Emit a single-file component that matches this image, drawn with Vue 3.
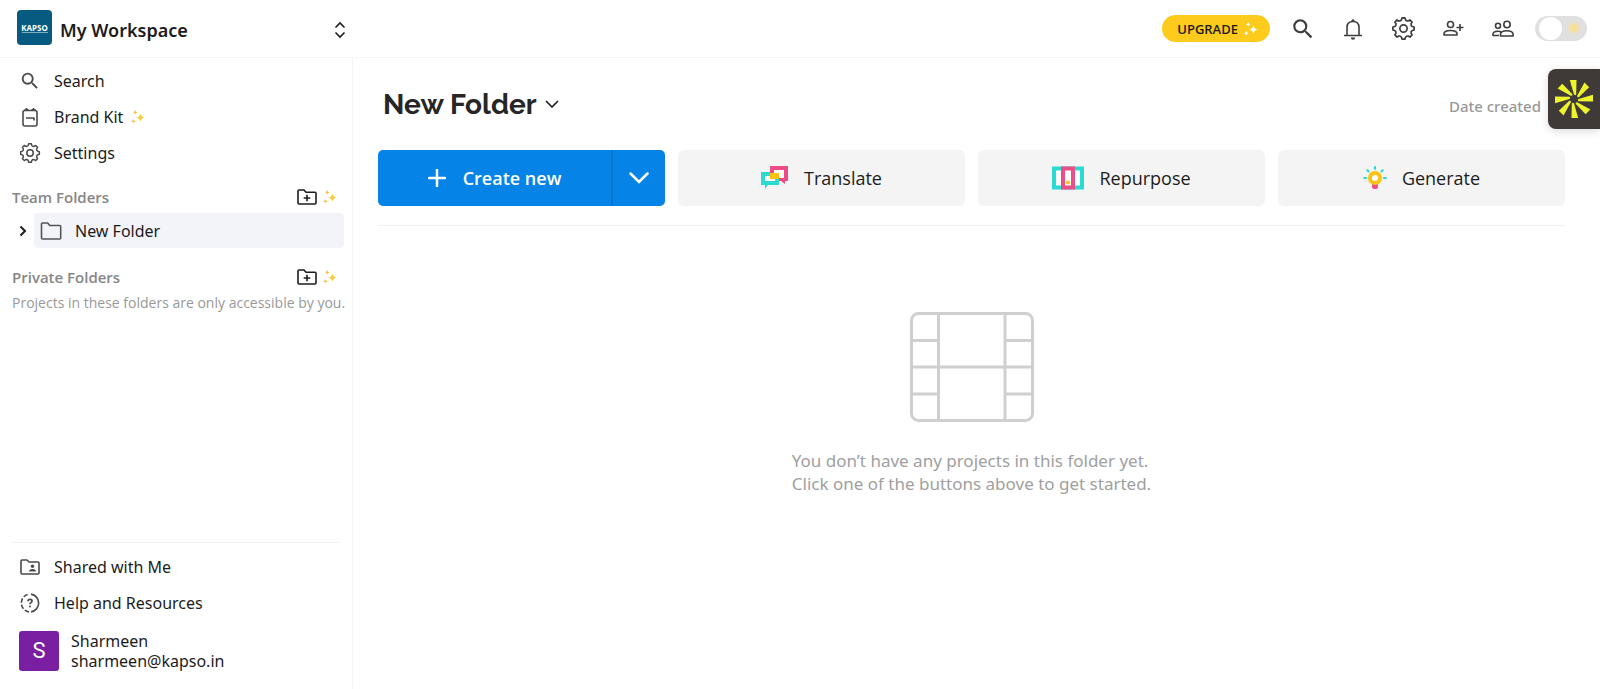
<template>
  <div class="app">
    <svg class="defs" aria-hidden="true">
      <symbol id="sparkles" viewBox="0 0 14 14">
        <path d="M9.4 3.2Q9.9 7 13.8 7.6Q9.9 8.2 9.4 12Q8.8 8.2 5 7.6Q8.8 7 9.4 3.2Z" />
        <path d="M4.2 0Q4.5 2 6.4 2.4Q4.5 2.8 4.2 4.8Q3.8 2.8 2 2.4Q3.8 2 4.2 0Z" />
        <path d="M2.4 9Q2.7 10.9 4.8 11.3Q2.7 11.6 2.4 13.6Q2 11.6 0 11.3Q2 10.9 2.4 9Z" />
      </symbol>
      <symbol id="search" viewBox="0 0 24 24">
        <path fill="currentColor" d="M15.5 14h-.79l-.28-.27A6.47 6.47 0 0 0 16 9.5 6.5 6.5 0 1 0 9.5 16c1.61 0 3.09-.59 4.23-1.57l.27.28v.79l5 4.99L20.49 19l-4.99-5zm-6 0C7.01 14 5 11.99 5 9.5S7.01 5 9.5 5 14 7.01 14 9.5 11.99 14 9.5 14z" />
      </symbol>
      <symbol id="gear" viewBox="0 0 24 24">
        <path :d="gearPath" class="line" />
        <circle cx="12" cy="12" r="3.5" class="line" />
      </symbol>
      <symbol id="kit" viewBox="0 0 20 20">
        <rect x="3" y="3.5" width="14" height="15.500" rx="2" class="line" />
        <path d="M6.500 3V1M13.500 3V1M4.500 2.800h4M11.500 2.800h4M6 11h8v2.600" class="line" />
      </symbol>
      <symbol id="shared" viewBox="0 0 20 20">
        <path d="M1 16V4q0-1 1-1h5l2 2h9q1 0 1 1v10q0 1-1 1H2q-1 0-1-1z" class="line" />
        <circle cx="12.500" cy="9.300" r="1.700" fill="currentColor" />
        <path d="M9 14.500q0-2.600 3.500-2.600t3.500 2.600z" fill="currentColor" />
      </symbol>
      <symbol id="help" viewBox="0 0 20 20">
        <path d="M11 1.100A9 9 0 0 1 11 18.900" class="line" />
        <path d="M9 18.900A9 9 0 0 1 9 1.100" class="line" stroke-dasharray="4.500 2" />
        <path d="M7.900 8.300q.1-1.900 2.100-1.900t2.100 1.700q0 1-1.200 1.700-.9.500-.9 1.500" class="line" />
        <circle cx="10" cy="13.600" r="1" fill="currentColor" />
      </symbol>
      <symbol id="folder-plus" viewBox="0 0 20 18">
        <path d="M1 15V3q0-1 1-1h5l2 2.300h9q1 0 1 1V15q0 1-1 1H2q-1 0-1-1z" class="line" />
        <path d="M10 6.700v6.600M6.700 10h6.600" class="line" />
      </symbol>
    </svg>

    <header class="topbar">
      <button class="workspace" type="button">
        <span class="workspace-logo"><span>KAPSO</span><i></i></span>
        <span class="workspace-name">My Workspace</span>
        <svg class="updown" viewBox="0 0 12 18"><path d="M1.500 6.500L6 2l4.500 4.500M1.500 11.500L6 16l4.500-4.500" /></svg>
      </button>

      <div class="actions">
        <button class="upgrade" type="button">
          UPGRADE <svg class="sparkle"><use href="#sparkles" /></svg>
        </button>
        <button class="icon-btn" type="button" aria-label="Search">
          <svg class="i-search"><use href="#search" /></svg>
        </button>
        <button class="icon-btn" type="button" aria-label="Notifications">
          <svg viewBox="0 0 22 24">
            <path d="M5 18V10.500q0-6 6-6t6 6V18M2 18.500h18" class="line" />
            <path d="M9.300 4a1.700 1.700 0 0 1 3.400 0zM8.800 20.500h4.400a2.200 2.200 0 0 1-4.400 0z" fill="currentColor" />
          </svg>
        </button>
        <button class="icon-btn" type="button" aria-label="Settings">
          <svg class="i-gear"><use href="#gear" /></svg>
        </button>
        <button class="icon-btn" type="button" aria-label="Invite people">
          <svg viewBox="0 0 22 22">
            <circle cx="8.500" cy="6.500" r="3" class="line" />
            <path d="M2 17v-1.200q0-3.300 6.500-3.300t6.500 3.300V17zM18 6v7M14.500 9.500h7" class="line" />
          </svg>
        </button>
        <button class="icon-btn" type="button" aria-label="Team members">
          <svg viewBox="0 0 22 22">
            <circle cx="15" cy="6.500" r="3.200" class="line" />
            <circle cx="6" cy="7.800" r="2.500" class="line" />
            <path d="M8.500 18v-1.400q0-3.800 6.300-3.800t6.300 3.800V18zM7 17.500H1v-1.300q0-3 5-3 1.700 0 3 .5" class="line" />
          </svg>
        </button>
        <input v-model="darkMode" class="theme-toggle" type="checkbox" aria-label="Dark mode" />
      </div>
    </header>

    <div class="body">
      <aside class="sidebar">
        <nav class="nav">
          <a v-for="item in topLinks" :key="item.label" class="nav-item" href="#">
            <svg :class="['nav-icon', item.icon]"><use :href="'#' + item.icon" /></svg>
            {{ item.label }}
            <svg v-if="item.premium" class="sparkle"><use href="#sparkles" /></svg>
          </a>
        </nav>

        <section class="folders">
          <div class="folders-head">
            <h2>Team Folders</h2>
            <button type="button" aria-label="New team folder">
              <svg class="folder-plus"><use href="#folder-plus" /></svg>
              <svg class="sparkle"><use href="#sparkles" /></svg>
            </button>
          </div>
          <div class="folder-row">
            <button class="expand" type="button" aria-label="Expand folder">
              <svg viewBox="0 0 8 12"><path d="M1.500 1.500L6 6l-4.500 4.500" /></svg>
            </button>
            <a class="folder" href="#">
              <svg viewBox="0 0 22 20"><path d="M1.500 17V3q0-1 1-1h5.200l2 2.500h10q1 0 1 1V17q0 1-1 1h-17.200q-1 0-1-1z" /></svg>
              New Folder
            </a>
          </div>
        </section>

        <section class="folders">
          <div class="folders-head">
            <h2>Private Folders</h2>
            <button type="button" aria-label="New private folder">
              <svg class="folder-plus"><use href="#folder-plus" /></svg>
              <svg class="sparkle"><use href="#sparkles" /></svg>
            </button>
          </div>
          <p class="folders-note">Projects in these folders are only accessible by you.</p>
        </section>

        <div class="sidebar-foot">
          <nav class="nav">
            <a v-for="item in bottomLinks" :key="item.label" class="nav-item" href="#">
              <svg class="nav-icon"><use :href="'#' + item.icon" /></svg>
              {{ item.label }}
            </a>
          </nav>
          <button class="account" type="button">
            <span class="avatar">S</span>
            <span class="account-text">Sharmeen<br />sharmeen@kapso.in</span>
          </button>
        </div>
      </aside>

      <main class="main">
        <div class="main-head">
          <h1>
            <button class="folder-title" type="button">
              New Folder
              <svg viewBox="0 0 14 8"><path d="M1 1l6 6 6-6" /></svg>
            </button>
          </h1>
          <button class="sort" type="button">Date created</button>
        </div>

        <div class="tiles">
          <div class="create">
            <button class="create-main" type="button">
              <svg viewBox="0 0 18 18"><path d="M9 1v16M1 9h16" /></svg>
              Create new
            </button>
            <button class="create-more" type="button" aria-label="More options">
              <svg viewBox="0 0 20 12"><path d="M1.500 1.500L10 10l8.500-8.500" /></svg>
            </button>
          </div>
          <button class="tile" type="button">
            <svg class="translate" viewBox="0 0 28 24">
              <path d="M9 0h18v15h-3v3l-4-3h-2v-3h5V4H13v3H9z" fill="#ec4d87" />
              <path d="M4 10h10v5H4z" fill="#fff" />
              <path d="M13 4h10v8h-10z" fill="#fff" />
              <path d="M0 6h9v4H4v5h10v-2h4v6H7l-3 4v-4H0z" fill="#2bdad0" />
              <path d="M9 7h9v6H9z" fill="#fac213" />
            </svg>
            Translate
          </button>
          <button class="tile" type="button">
            <svg class="repurpose" viewBox="0 0 32 24">
              <rect x="2" y="2.500" width="28" height="19" fill="#fff" stroke="#2bdad0" stroke-width="4" />
              <rect x="11" y="2.500" width="10" height="19" fill="#fff" stroke="#ec4d87" stroke-width="4" />
              <circle cx="16" cy="16.500" r="2" fill="#fac213" />
            </svg>
            Repurpose
          </button>
          <button class="tile" type="button">
            <svg class="generate" viewBox="0 0 24 24">
              <path d="M9 17h6v4q0 2-2 2h-2q-2 0-2-2z" fill="#ec4d87" />
              <circle cx="12" cy="12" r="5" fill="#fff" stroke="#fac213" stroke-width="4" />
              <path d="M12 1.200v1.600M4.300 4.300l1.200 1.100M19.700 4.300l-1.200 1.100M1.200 12h1.800M21 12h1.800" stroke="#2bdad0" stroke-width="2.200" stroke-linecap="round" />
            </svg>
            Generate
          </button>
        </div>

        <div class="empty">
          <svg viewBox="0 0 124 110">
            <rect x="1.500" y="1.500" width="121" height="107" rx="7" />
            <path d="M28.500 1.500v107M95 1.500v107M1.500 28.500h27M95 28.500h27M1.500 55h121M1.500 82h27M95 82h27" />
          </svg>
          <p>You don’t have any projects in this folder yet.<br />Click one of the buttons above to get started.</p>
        </div>
      </main>
    </div>

    <button class="side-widget" type="button" aria-label="Open assistant">
      <svg viewBox="-20 -20 40 40">
        <path
          v-for="n in 8"
          :key="n"
          d="M-4.200 -19L2.500 -19L2.200 -4.500Q1.200 -3 0 -4.500z"
          :transform="`rotate(${n * 45})`"
        />
      </svg>
    </button>
  </div>
</template>

<script setup>
import { ref } from 'vue';

const darkMode = ref(false);

const topLinks = [
  { label: 'Search', icon: 'search' },
  { label: 'Brand Kit', icon: 'kit', premium: true },
  { label: 'Settings', icon: 'gear' }
];

const bottomLinks = [
  { label: 'Shared with Me', icon: 'shared' },
  { label: 'Help and Resources', icon: 'help' }
];

// eight rounded teeth around the centre of a 24 unit box
const gearPoint = (radius, degrees) => {
  const a = (degrees * Math.PI) / 180;
  return `${(12 + radius * Math.sin(a)).toFixed(2)} ${(12 - radius * Math.cos(a)).toFixed(2)}`;
};

const gearPath = 'M' + Array.from({ length: 8 }, (_, i) => {
  const a = i * 45;
  return [
    gearPoint(10.3, a - 8),
    gearPoint(10.3, a + 8),
    `${gearPoint(8.6, a + 13)}Q${gearPoint(7.4, a + 22.5)}`,
    gearPoint(8.6, a + 32)
  ].join('L').replace(/Q([\d.]+ [\d.]+)L/, 'Q$1 ');
}).join('L') + 'Z';
</script>

<style>
body {
  margin: 0;
  background: #fff;
}
</style>

<style scoped>
.app {
  position: relative;
  display: flex;
  flex-direction: column;
  min-height: 100vh;
  overflow: hidden;
  font-family: "Noto Sans", "Open Sans", sans-serif;
  font-size: 16px;
  color: #1c1c1c;
}

.defs {
  position: absolute;
  width: 0;
  height: 0;
}

button {
  padding: 0;
  border: 0;
  background: none;
  font: inherit;
  color: inherit;
  cursor: pointer;
}

a {
  color: inherit;
  text-decoration: none;
}

svg {
  flex: none;
}

.line {
  fill: none;
  stroke: currentColor;
  stroke-width: 1.6;
  stroke-linejoin: round;
}

.sparkle {
  width: 14px;
  height: 14px;
  fill: #f8cb3c;
}

/* Top bar */
.topbar {
  display: flex;
  justify-content: space-between;
  height: 57px;
  border-bottom: 1px solid #f5f5f5;
}

.workspace {
  display: flex;
  align-items: center;
  width: 352px;
  padding: 0 6px 2px 17px;
  box-sizing: border-box;
  text-align: left;
}

.workspace-logo {
  display: flex;
  flex-direction: column;
  align-items: center;
  justify-content: center;
  width: 35px;
  height: 35px;
  margin-right: 8px;
  border-radius: 4px;
  background: #075b80;
  color: #fff;
  font-size: 8px;
  font-weight: 700;
  line-height: 9px;
}

.workspace-logo i {
  width: 26px;
  height: 1px;
  background: #7fa9bd;
}

.workspace-name {
  flex: 1;
  padding-top: 4px;
  font-size: 18px;
  font-weight: 600;
}

.updown {
  width: 12px;
  height: 18px;
  margin-top: 4px;
  fill: none;
  stroke: #1c1c1c;
  stroke-width: 1.6;
}

.actions {
  display: flex;
  align-items: center;
  padding-right: 13px;
  color: #3d3d3d;
}

.upgrade {
  display: flex;
  align-items: center;
  gap: 6px;
  height: 27px;
  margin-right: 8px;
  padding: 0 12px 0 15px;
  border-radius: 14px;
  background: #fdcb1b;
  color: #1c1c1c;
  font-family: "Open Sans", sans-serif;
  font-size: 13px;
  font-weight: 600;
}

.upgrade .sparkle {
  fill: #fff;
}

.icon-btn {
  display: flex;
  align-items: center;
  justify-content: center;
  width: 50px;
  height: 40px;
}

.icon-btn svg {
  width: 22px;
  height: 24px;
}

.icon-btn .i-search {
  width: 26px;
  height: 26px;
}

.icon-btn .i-gear {
  width: 25px;
  height: 25px;
}

.theme-toggle {
  appearance: none;
  display: flex;
  align-items: center;
  width: 52px;
  height: 25px;
  margin: 0 0 0 7px;
  padding: 0 4px;
  box-sizing: border-box;
  border-radius: 13px;
  background: radial-gradient(circle at 39px 12px, #f8df8c 0, #f5e09b 3px, #e0e0e0 7px);
}

.theme-toggle::before {
  content: "";
  width: 23px;
  height: 23px;
  border-radius: 50%;
  background: #fff;
}

.theme-toggle:checked {
  justify-content: flex-end;
}

/* Sidebar */
.body {
  display: flex;
  flex: 1;
}

.sidebar {
  display: flex;
  flex-direction: column;
  width: 353px;
  padding: 5px 8px 15px 12px;
  box-sizing: border-box;
  border-right: 1px solid #f5f5f5;
}

.nav-item {
  display: flex;
  align-items: center;
  height: 36px;
  padding-left: 8px;
}

.nav-icon {
  width: 20px;
  height: 20px;
  margin-right: 14px;
  color: #4a4a4a;
}

.nav-icon.search,
.nav-icon.gear {
  width: 22px;
  height: 22px;
  margin: 0 13px 0 -1px;
}

.nav-item .sparkle {
  margin-left: 8px;
}

.folders {
  margin-top: 12px;
}

.folders + .folders {
  margin-top: 15px;
}

.folders-head {
  display: flex;
  align-items: center;
  justify-content: space-between;
  height: 28px;
  font-family: "Open Sans", sans-serif;
}

.folders-head h2 {
  margin: 0;
  font-size: 15px;
  font-weight: 600;
  color: #868686;
}

.folders-head button {
  display: flex;
  align-items: center;
  gap: 6px;
  padding-right: 7px;
}

.folder-plus {
  width: 20px;
  height: 18px;
}

.folder-row {
  display: flex;
  align-items: center;
  padding-top: 2px;
}

.expand {
  display: flex;
  justify-content: center;
  width: 22px;
}

.expand svg {
  width: 8px;
  height: 12px;
  fill: none;
  stroke: #1c1c1c;
  stroke-width: 2;
}

.folder {
  display: flex;
  flex: 1;
  align-items: center;
  gap: 13px;
  height: 35px;
  padding-left: 6px;
  border-radius: 4px;
  background: #f3f4f9;
}

.folder svg {
  width: 22px;
  height: 20px;
  fill: none;
  stroke: #555;
  stroke-width: 1.6;
}

.folders-note {
  margin: 0;
  font-family: "Open Sans", sans-serif;
  font-size: 14px;
  line-height: 24px;
  color: #999;
  white-space: nowrap;
}

.sidebar-foot {
  margin-top: auto;
}

.sidebar-foot::before {
  content: "";
  display: block;
  height: 1px;
  margin: 0 5px 6px 0;
  background: #f2f2f2;
}

.account {
  display: flex;
  align-items: center;
  gap: 12px;
  margin-top: 7px;
  padding: 3px 0 3px 7px;
  line-height: 20px;
  text-align: left;
}

.avatar {
  width: 40px;
  height: 40px;
  border-radius: 3px;
  background: #7a1fa2;
  color: #fff;
  font-family: Roboto, sans-serif;
  font-size: 22px;
  line-height: 40px;
  text-align: center;
}

/* Main */
.main {
  flex: 1;
  min-width: 0;
  padding: 25px 35px 0 25px;
}

.main-head {
  display: flex;
  align-items: center;
  justify-content: space-between;
  height: 42px;
  padding: 0 24px 0 5px;
}

.main-head h1 {
  margin: 0;
  font-family: Raleway, Lato, sans-serif;
  font-size: 28px;
  font-weight: 700;
  color: #262626;
}

.folder-title {
  display: flex;
  align-items: center;
  gap: 8px;
}

.folder-title svg {
  width: 14px;
  height: 8px;
  fill: none;
  stroke: #1c1c1c;
  stroke-width: 1.6;
}

.sort {
  padding-top: 3px;
  font-size: 15px;
  font-weight: 500;
  color: #999;
}

.tiles {
  display: grid;
  grid-template-columns: repeat(4, 1fr);
  gap: 13px;
  margin-top: 25px;
  padding-bottom: 19px;
  border-bottom: 1px solid #f0f0f0;
  font-family: "Open Sans", sans-serif;
}

.create {
  display: flex;
  height: 56px;
  border-radius: 5px;
  background: #0583e6;
  color: #fff;
  overflow: hidden;
}

.create-main {
  display: flex;
  flex: 1;
  align-items: center;
  justify-content: center;
  gap: 17px;
  font-size: 18px;
  font-weight: 600;
}

.create-more {
  display: flex;
  align-items: center;
  justify-content: center;
  width: 54px;
  border-left: 2px solid #0573d0;
}

.create svg {
  fill: none;
  stroke: #fff;
  stroke-width: 2.500;
  stroke-linecap: round;
}

.create-main svg {
  width: 18px;
  height: 18px;
}

.create-more svg {
  width: 20px;
  height: 12px;
}

.tile {
  display: flex;
  align-items: center;
  justify-content: center;
  gap: 15px;
  height: 56px;
  border-radius: 6px;
  background: #f4f4f4;
  font-size: 18px;
  font-weight: 500;
}

.tile svg {
  height: 24px;
}

.translate {
  width: 28px;
}

.repurpose {
  width: 32px;
}

.generate {
  width: 24px;
}

.empty {
  display: flex;
  flex-direction: column;
  align-items: center;
  padding-top: 86px;
}

.empty svg {
  width: 124px;
  height: 110px;
  fill: none;
  stroke: #cfcfcf;
  stroke-width: 3;
}

.empty p {
  margin: 27px 0 0;
  font-size: 17px;
  line-height: 23px;
  color: #a0a0a0;
}

/* Floating tab on the right edge */
.side-widget {
  position: absolute;
  top: 69px;
  right: 0;
  display: flex;
  align-items: center;
  justify-content: center;
  width: 52px;
  height: 60px;
  border-radius: 8px 0 0 8px;
  background: #3f3a38;
  box-shadow: 0 2px 10px rgba(0, 0, 0, 0.15);
}

.side-widget svg {
  width: 40px;
  height: 40px;
  fill: #edf52a;
}
</style>
